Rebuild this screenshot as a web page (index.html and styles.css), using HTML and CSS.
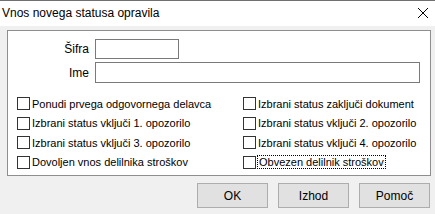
FILE: index.html
```html
<!DOCTYPE html>
<html lang="sl">
<head>
  <meta charset="UTF-8" />
  <title>Vnos novega statusa opravila</title>
  <link rel="stylesheet" href="styles.css">
</head>
<body>
  <div class="window">
    <div class="titlebar">
      <span class="title">Vnos novega statusa opravila</span>
      <svg class="close" width="12" height="12" viewBox="0 0 12 12">
        <path d="M1 1 L11 11 M11 1 L1 11" stroke="#000" stroke-width="1" fill="none" />
      </svg>
    </div>

    <div class="content">
      <div class="group">
        <div class="field">
          <label class="label">Šifra</label>
          <input class="input input-short" type="text">
        </div>
        <div class="field">
          <label class="label">Ime</label>
          <input class="input input-long" type="text">
        </div>

        <div class="checks">
          <div class="check"><span class="box"></span><span>Ponudi prvega odgovornega delavca</span></div>
          <div class="check"><span class="box"></span><span>Izbrani status zaključi dokument</span></div>
          <div class="check"><span class="box"></span><span>Izbrani status vključi 1. opozorilo</span></div>
          <div class="check"><span class="box"></span><span>Izbrani status vključi 2. opozorilo</span></div>
          <div class="check"><span class="box"></span><span>Izbrani status vključi 3. opozorilo</span></div>
          <div class="check"><span class="box"></span><span>Izbrani status vključi 4. opozorilo</span></div>
          <div class="check"><span class="box"></span><span>Dovoljen vnos delilnika stroškov</span></div>
          <div class="check"><span class="box"></span><span class="focused">Obvezen delilnik stroškov</span></div>
        </div>
      </div>

      <div class="buttons">
        <button class="btn">OK</button>
        <button class="btn">Izhod</button>
        <button class="btn">Pomoč</button>
      </div>
    </div>
  </div>
</body>
</html>
```

FILE: styles.css
```css
* {
  box-sizing: border-box;
}

body {
  margin: 0;
  font-family: 'Liberation Sans', Arial, sans-serif;
  font-size: 11px;
  color: #000;
  background: #f0f0f0;
}

.window {
  width: 435px;
  height: 214px;
  background: #f0f0f0;
  border-top: 1px solid #707070;
  overflow: hidden;
}

.titlebar {
  height: 25px;
  background: #fff;
  display: flex;
  align-items: center;
  justify-content: space-between;
  padding: 0 5px 1px 2px;
}

.title {
  font-size: 12px;
}

.close {
  margin-right: 1px;
}

.content {
  padding: 4px 4px 0 7px;
}

.group {
  width: 424px;
  height: 146px;
  background: #fff;
  border: 1px solid #8e8e8e;
  padding: 8px 0 0 0;
}

.field {
  display: flex;
  align-items: center;
  gap: 6px;
  margin-bottom: 3px;
}

.label {
  width: 81px;
  text-align: right;
  font-size: 12px;
}

.input {
  height: 20px;
  border: 1px solid #7a7a7a;
  background: #fff;
  margin: 0;
  padding: 0 2px;
}

.input-short {
  width: 84px;
}

.input-long {
  width: 325px;
  height: 21px;
}

.checks {
  display: grid;
  grid-template-columns: 226px 1fr;
  grid-auto-rows: 19.5px;
  padding: 8px 0 0 9px;
}

.check {
  display: flex;
  align-items: center;
  gap: 2px;
  white-space: nowrap;
}

.box {
  width: 13px;
  height: 13px;
  border: 1px solid #333;
  background: #fff;
  flex-shrink: 0;
}

.focused {
  outline: 1px dotted #000;
  outline-offset: 0;
  padding: 0 1px;
}

.buttons {
  display: flex;
  justify-content: flex-end;
  gap: 10px;
  margin-top: 7px;
  padding-right: 1px;
}

.btn {
  width: 71px;
  height: 25px;
  background: #e1e1e1;
  border: 1px solid #adadad;
  font-family: 'Liberation Sans', Arial, sans-serif;
  font-size: 12px;
  color: #000;
  margin: 0;
  padding: 0;
}
```
